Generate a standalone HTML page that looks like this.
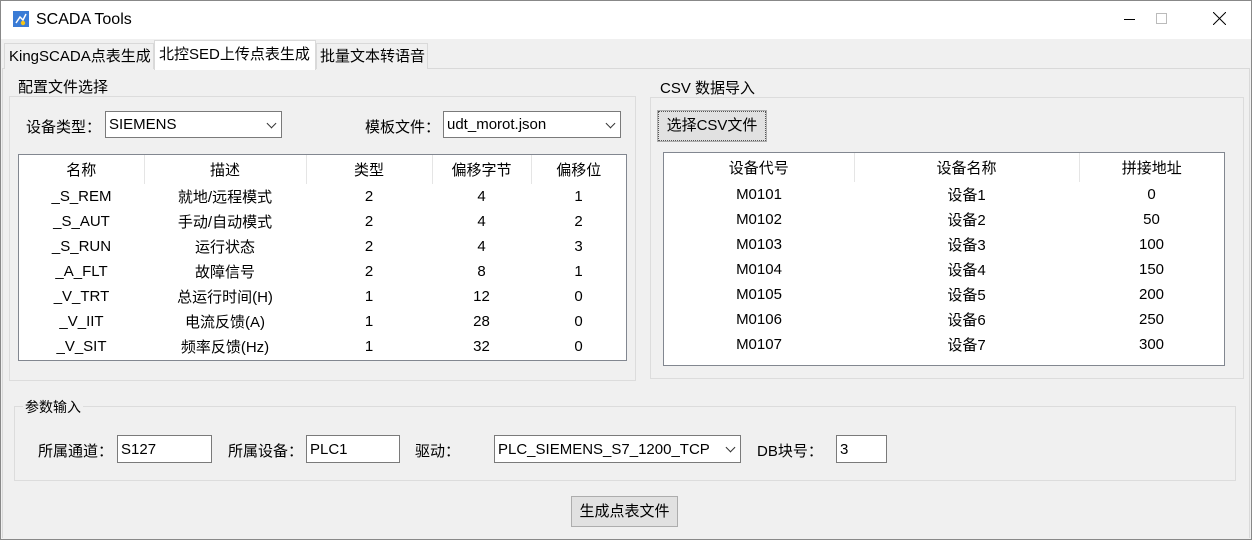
<!DOCTYPE html>
<html><head><meta charset="utf-8"><style>
*{box-sizing:border-box;margin:0;padding:0}
body{width:1252px;height:540px;background:#f0f0f0;font-family:"Liberation Sans","Noto Sans CJK SC",sans-serif;font-size:15px;color:#000;position:relative;overflow:hidden}
.a{position:absolute}
.win{left:0;top:0;width:1252px;height:540px;border:1px solid #888}
.title{left:1px;top:1px;width:1250px;height:38px;background:#fff}
.tab{border:1px solid #d9d9d9;border-bottom:none;background:#f0f0f0;height:26px;line-height:26px;padding-left:4px;font-size:15px;white-space:nowrap}
.grp{border:1px solid #dcdcdc}
.gt{background:#f0f0f0;padding:0 2px;font-size:14px;line-height:16px}
.box{background:#fff;border:1px solid #7a7a7a;line-height:25px;padding-left:3px}
.btn{background:#e1e1e1;border:1px solid #adadad;text-align:center}
table{border-collapse:collapse;background:#fff;width:100%}
td{text-align:center;height:25px;font-size:15px;padding:0}
th{font-weight:normal;height:29px;border-right:1px solid #e5e5e5;font-size:15px}
.tw{background:#fff;border:1px solid #828790;overflow:hidden}
.chev{position:absolute;right:6px;top:8px;width:7px;height:7px;border-right:1px solid #333;border-bottom:1px solid #333;transform:rotate(45deg)}
</style></head><body>
<div class="a win"></div>
<div class="a title"></div>
<svg class="a" style="left:13px;top:11px" width="16" height="16"><rect width="16" height="16" fill="#3a7bd5"/><path d="M3 12 L7 6 L10 9 L13 3" stroke="#fff" stroke-width="1.5" fill="none"/><circle cx="10" cy="12" r="2.2" fill="#f5c518"/></svg>
<div class="a" style="left:36px;top:11px;font-size:16px">SCADA Tools</div>
<div class="a" style="left:1124px;top:19px;width:11px;height:1px;background:#000"></div>
<div class="a" style="left:1156px;top:13px;width:11px;height:11px;border:1px solid #bbb"></div>
<svg class="a" style="left:1213px;top:12px" width="13" height="13"><path d="M0 0L13 13M13 0L0 13" stroke="#000" stroke-width="1"/></svg>

<div class="a" style="left:2px;top:68px;width:1248px;height:470px;border:1px solid #d9d9d9;border-bottom:none"></div>
<div class="a tab" style="left:4px;top:43px;width:150px">KingSCADA点表生成</div>
<div class="a tab" style="left:154px;top:40px;width:162px;height:30px;background:#fff;padding-top:1px">北控SED上传点表生成</div>
<div class="a tab" style="left:316px;top:43px;width:112px;padding-left:3px">批量文本转语音</div>

<div class="a grp" style="left:9px;top:96px;width:627px;height:285px"></div>
<div class="a gt" style="left:16px;top:80px;font-size:15px">配置文件选择</div>
<div class="a" style="left:26px;top:116px">设备类型：</div>
<div class="a box" style="left:105px;top:111px;width:177px;height:27px">SIEMENS<span class="chev"></span></div>
<div class="a" style="left:365px;top:116px">模板文件：</div>
<div class="a box" style="left:443px;top:111px;width:178px;height:27px">udt_morot.json<span class="chev"></span></div>
<div class="a tw" style="left:18px;top:154px;width:609px;height:207px">
<table><colgroup><col style="width:125px"><col style="width:162px"><col style="width:126px"><col style="width:99px"><col></colgroup>
<tr><th>名称</th><th>描述</th><th>类型</th><th>偏移字节</th><th style="border:none">偏移位</th></tr>
<tr><td>_S_REM</td><td>就地/远程模式</td><td>2</td><td>4</td><td>1</td></tr>
<tr><td>_S_AUT</td><td>手动/自动模式</td><td>2</td><td>4</td><td>2</td></tr>
<tr><td>_S_RUN</td><td>运行状态</td><td>2</td><td>4</td><td>3</td></tr>
<tr><td>_A_FLT</td><td>故障信号</td><td>2</td><td>8</td><td>1</td></tr>
<tr><td>_V_TRT</td><td>总运行时间(H)</td><td>1</td><td>12</td><td>0</td></tr>
<tr><td>_V_IIT</td><td>电流反馈(A)</td><td>1</td><td>28</td><td>0</td></tr>
<tr><td>_V_SIT</td><td>频率反馈(Hz)</td><td>1</td><td>32</td><td>0</td></tr>
</table></div>

<div class="a grp" style="left:650px;top:97px;width:594px;height:282px"></div>
<div class="a gt" style="left:658px;top:81px;font-size:15px">CSV 数据导入</div>
<div class="a btn" style="left:658px;top:111px;width:108px;height:30px;line-height:28px;border:1px dotted #555;box-shadow:0 0 0 1px #adadad">选择CSV文件</div>
<div class="a tw" style="left:663px;top:152px;width:562px;height:214px">
<table><colgroup><col style="width:190px"><col style="width:225px"><col></colgroup>
<tr><th>设备代号</th><th>设备名称</th><th style="border:none">拼接地址</th></tr>
<tr><td>M0101</td><td>设备1</td><td>0</td></tr>
<tr><td>M0102</td><td>设备2</td><td>50</td></tr>
<tr><td>M0103</td><td>设备3</td><td>100</td></tr>
<tr><td>M0104</td><td>设备4</td><td>150</td></tr>
<tr><td>M0105</td><td>设备5</td><td>200</td></tr>
<tr><td>M0106</td><td>设备6</td><td>250</td></tr>
<tr><td>M0107</td><td>设备7</td><td>300</td></tr>
</table></div>

<div class="a grp" style="left:14px;top:406px;width:1222px;height:75px"></div>
<div class="a gt" style="left:23px;top:399px">参数输入</div>
<div class="a" style="left:38px;top:440px">所属通道：</div>
<div class="a box" style="left:117px;top:435px;width:95px;height:28px;padding-top:1px">S127</div>
<div class="a" style="left:228px;top:440px">所属设备：</div>
<div class="a box" style="left:306px;top:435px;width:94px;height:28px;padding-top:1px">PLC1</div>
<div class="a" style="left:415px;top:440px">驱动：</div>
<div class="a box" style="left:494px;top:435px;width:247px;height:28px;padding-top:1px">PLC_SIEMENS_S7_1200_TCP<span class="chev"></span></div>
<div class="a" style="left:757px;top:440px">DB块号：</div>
<div class="a box" style="left:836px;top:435px;width:51px;height:28px;padding-top:1px">3</div>
<div class="a btn" style="left:571px;top:496px;width:107px;height:31px;line-height:29px">生成点表文件</div>
</body></html>
